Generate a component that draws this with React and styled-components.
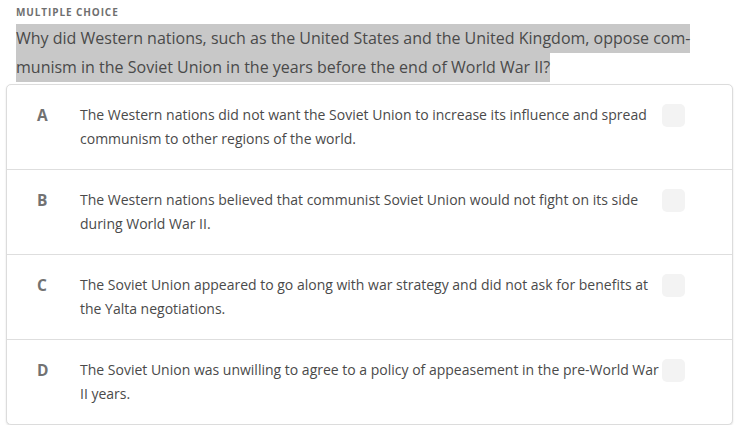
import React from 'react'
import styled, { createGlobalStyle } from 'styled-components'

const GlobalStyle = createGlobalStyle`
    body {
        margin: 0;
        background: #ffffff;
        font-family: 'Open Sans', 'Noto Sans', sans-serif;
    }
`

const Page = styled.div`
    padding: 4px 21px 0 6px;
`

const Label = styled.div`
    margin-left: 10px;
    font-size: 10px;
    line-height: 16px;
    font-weight: 700;
    letter-spacing: 0.9px;
    text-transform: uppercase;
    color: #6f6f6f;
`

const Question = styled.div`
    margin: 4px 0 2px 10px;
    font-size: 16px;
    line-height: 29px;
    color: #4a4a4a;
    span {
        background: #c8c8c8;
        padding: 3px 0 4px;
    }
`

const Card = styled.div`
    border: 1px solid #dcdcdc;
    border-radius: 5px;
    box-shadow: 0 1px 2px rgba(0, 0, 0, 0.12);
    background: #ffffff;
`

const Row = styled.div`
    display: grid;
    grid-template-columns: 43px 1fr 23px;
    align-items: start;
    padding: 18px 47px 18px 30px;
    border-top: ${props => (props.first ? 'none' : '1px solid #dedede')};
`

const Letter = styled.div`
    font-size: 15.5px;
    line-height: 24px;
    font-weight: 700;
    color: #727272;
`

const Text = styled.div`
    font-size: 14px;
    line-height: 24px;
    color: #4a4a4a;
    padding-right: 3px;
`

const Check = styled.div`
    width: 23px;
    height: 23px;
    margin-top: 1px;
    border-radius: 5px;
    background: #f3f3f3;
`

const options = [
    { key: 'A', text: 'The Western nations did not want the Soviet Union to increase its influence and spread communism to other regions of the world.' },
    { key: 'B', text: 'The Western nations believed that communist Soviet Union would not fight on its side during World War II.' },
    { key: 'C', text: 'The Soviet Union appeared to go along with war strategy and did not ask for benefits at the Yalta negotiations.' },
    { key: 'D', text: 'The Soviet Union was unwilling to agree to a policy of appeasement in the pre-World War II years.' }
]

const App = () => {
    return (
        <React.Fragment>
            <GlobalStyle />
            <Page>
                <Label>Multiple Choice</Label>
                <Question>
                    <span>Why did Western nations, such as the United States and the United Kingdom, oppose com{'\u00AD'}munism in the Soviet Union in the years before the end of World War II?</span>
                </Question>
                <Card>
                    {options.map((option, i) => (
                        <Row key={option.key} first={i === 0}>
                            <Letter>{option.key}</Letter>
                            <Text>{option.text}</Text>
                            <Check />
                        </Row>
                    ))}
                </Card>
            </Page>
        </React.Fragment>
    )
}

export default App
